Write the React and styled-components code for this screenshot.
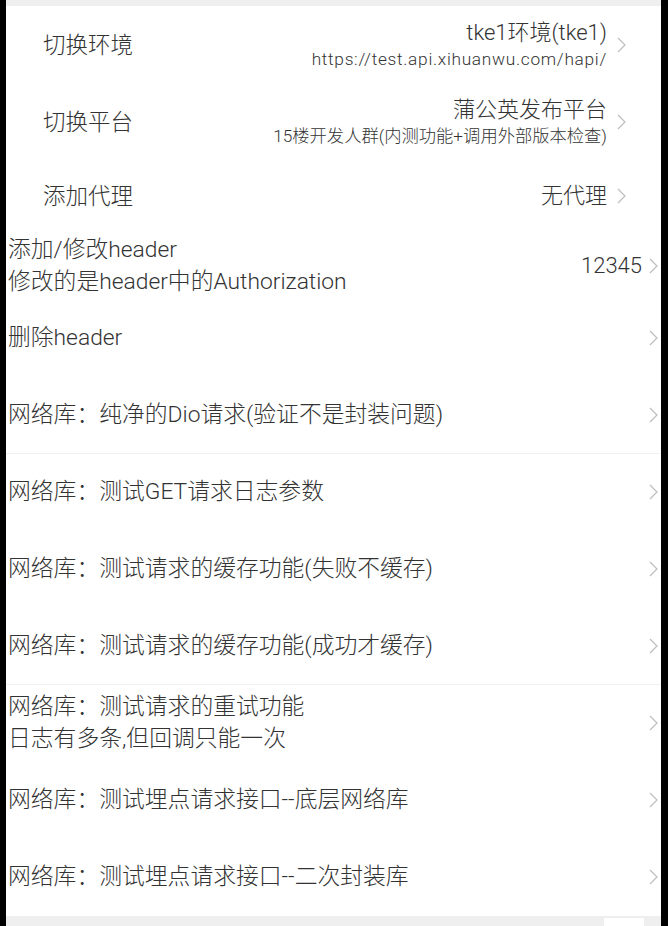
import React from "react";
import styled, { createGlobalStyle } from "styled-components";

const GlobalStyle = createGlobalStyle`
  html, body {
    margin: 0;
    padding: 0;
    background: #000;
  }
  body {
    font-family: Roboto, "Noto Sans CJK SC", "Noto Sans", sans-serif;
    font-weight: 300;
    color: #333;
  }
`;

const Page = styled.div`
  margin-left: 6px;
  width: 655px;
  height: 926px;
  background: #fff;
  display: flex;
  flex-direction: column;
  overflow: hidden;
`;

const TopBand = styled.div`
  height: 6px;
  flex: none;
  background: #efefef;
`;

const BottomBand = styled.div`
  flex: 1;
  background: #efefef;
  display: flex;
  justify-content: flex-end;
  align-items: flex-end;
  padding-right: 17px;
`;

const BottomTab = styled.div`
  width: 40px;
  height: 8px;
  background: #fff;
`;

const SettingRow = styled.div`
  box-sizing: border-box;
  height: ${(p) => p.h}px;
  flex: none;
  display: flex;
  align-items: center;
  justify-content: space-between;
  padding: 0 35px 0 37px;
`;

const Title = styled.span`
  font-size: 22.5px;
  line-height: 30px;
  color: #333;
`;

const RightSide = styled.div`
  display: flex;
  align-items: center;
  gap: ${(p) => p.gap || 10}px;
`;

const ValueBox = styled.div`
  display: flex;
  flex-direction: column;
  align-items: flex-end;
`;

const ValueMain = styled.span`
  font-size: 22px;
  line-height: 28px;
  color: #333;
`;

const ValueSub = styled.span`
  font-size: 17.3px;
  line-height: 24px;
  letter-spacing: ${(p) => p.spacing || 0}px;
  color: #333;
`;

const ActionRow = styled.div`
  box-sizing: border-box;
  height: ${(p) => p.h || 77}px;
  flex: none;
  display: flex;
  align-items: center;
  justify-content: space-between;
  padding: 0 3px 0 2px;
  border-bottom: 1px solid ${(p) => (p.divider ? "#f1f1f1" : "transparent")};
`;

const ActionText = styled.div`
  font-size: 22.8px;
  line-height: 32px;
  color: #333;
  white-space: pre-line;
`;

const Chevron = () => (
  <svg width="9" height="16" viewBox="0 0 9 16" fill="none">
    <polyline
      points="1,1 8,8 1,15"
      stroke="#bdbdbd"
      strokeWidth="1.2"
      strokeLinejoin="miter"
    />
  </svg>
);

const actions = [
  { text: "删除header" },
  { text: "网络库：纯净的Dio请求(验证不是封装问题)", divider: true },
  { text: "网络库：测试GET请求日志参数" },
  { text: "网络库：测试请求的缓存功能(失败不缓存)" },
  { text: "网络库：测试请求的缓存功能(成功才缓存)", divider: true },
  { text: "网络库：测试请求的重试功能\n日志有多条,但回调只能一次" },
  { text: "网络库：测试埋点请求接口--底层网络库" },
  { text: "网络库：测试埋点请求接口--二次封装库" },
];

export default function App() {
  return (
    <>
      <GlobalStyle />
      <Page>
        <TopBand />
        <SettingRow h={77}>
          <Title>切换环境</Title>
          <RightSide>
            <ValueBox>
              <ValueMain>tke1环境(tke1)</ValueMain>
              <ValueSub spacing={0.7}>https://test.api.xihuanwu.com/hapi/</ValueSub>
            </ValueBox>
            <Chevron />
          </RightSide>
        </SettingRow>
        <SettingRow h={77}>
          <Title>切换平台</Title>
          <RightSide>
            <ValueBox>
              <ValueMain>蒲公英发布平台</ValueMain>
              <ValueSub>15楼开发人群(内测功能+调用外部版本检查)</ValueSub>
            </ValueBox>
            <Chevron />
          </RightSide>
        </SettingRow>
        <SettingRow h={72}>
          <Title>添加代理</Title>
          <RightSide>
            <ValueMain>无代理</ValueMain>
            <Chevron />
          </RightSide>
        </SettingRow>
        <ActionRow h={68}>
          <ActionText>{"添加/修改header\n修改的是header中的Authorization"}</ActionText>
          <RightSide gap={7}>
            <ValueMain>12345</ValueMain>
            <Chevron />
          </RightSide>
        </ActionRow>
        {actions.map((a) => (
          <ActionRow key={a.text} divider={a.divider}>
            <ActionText>{a.text}</ActionText>
            <Chevron />
          </ActionRow>
        ))}
        <BottomBand>
          <BottomTab />
        </BottomBand>
      </Page>
    </>
  );
}
